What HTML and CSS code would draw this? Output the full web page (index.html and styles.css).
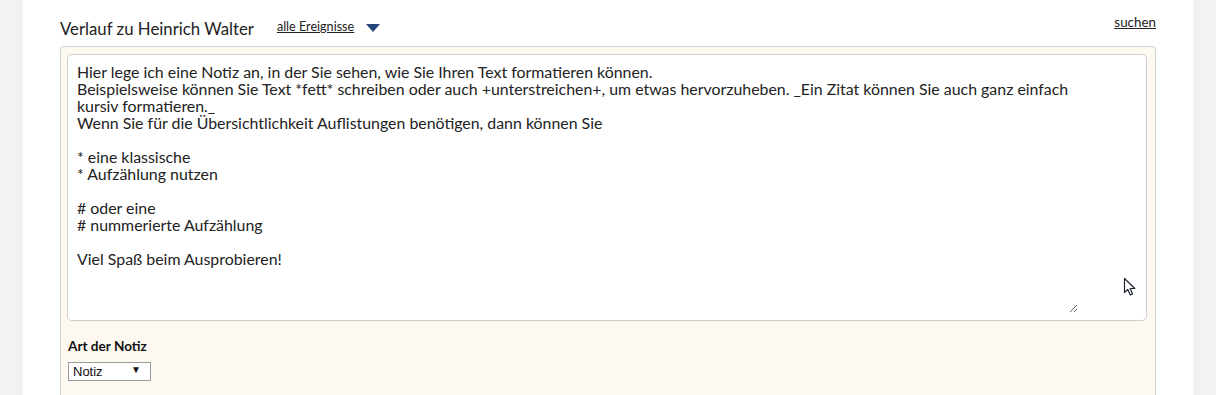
FILE: index.html
```html
<!DOCTYPE html>
<html lang="de">
<head>
  <meta charset="UTF-8">
  <meta name="viewport" content="width=device-width, initial-scale=1.0">
  <title>Verlauf zu Heinrich Walter</title>
  <link rel="stylesheet" href="styles.css">
</head>
<body>
  <div class="page">
    <div class="history-head">
      <h2>Verlauf zu Heinrich Walter</h2>
      <a href="#" class="filter-link">alle Ereignisse</a>
      <span class="filter-arrow"></span>
      <a href="#" class="search-link">suchen</a>
    </div>

    <div class="note-box">
      <div class="note-field">
        <textarea name="note">Hier lege ich eine Notiz an, in der Sie sehen, wie Sie Ihren Text formatieren können.
Beispielsweise können Sie Text *fett* schreiben oder auch +unterstreichen+, um etwas hervorzuheben. _Ein Zitat können Sie auch ganz einfach kursiv formatieren._
Wenn Sie für die Übersichtlichkeit Auflistungen benötigen, dann können Sie

* eine klassische
* Aufzählung nutzen

# oder eine
# nummerierte Aufzählung

Viel Spaß beim Ausprobieren!</textarea>
        <svg class="pointer" width="14" height="20" viewBox="0 0 14 20">
          <path d="M1.5 1.5 L1.5 15.5 L4.8 12.4 L7.3 18 L9.6 17 L7.2 11.5 L11.8 11.5 Z" fill="#fff" stroke="#1d2433" stroke-width="1.2" stroke-linejoin="round"/>
        </svg>
      </div>

      <label class="type-label" for="noteType">Art der Notiz</label>
      <span class="type-select">
        <select id="noteType">
          <option>Notiz</option>
          <option>Anruf</option>
          <option>E-Mail</option>
        </select>
      </span>
    </div>
  </div>
</body>
</html>
```

FILE: styles.css
```css
html, body {
  margin: 0;
  height: 100%;
  overflow: hidden;
}
body {
  background: #f2f2f2;
  font-family: Lato, "Liberation Sans", sans-serif;
  color: #222;
}
.page {
  margin: 0 23px;
  height: 100%;
  background: #fff;
  padding: 0 37px;
}
.history-head {
  display: flex;
  align-items: flex-start;
  height: 46px;
}
.history-head h2 {
  margin: 18px 0 0;
  font-size: 16.8px;
  font-weight: normal;
  color: #222;
}
.filter-link {
  margin: 19px 0 0 23px;
  font-size: 12.6px;
  color: #222;
}
.filter-arrow {
  margin: 24px 0 0 12px;
  width: 0;
  height: 0;
  border-left: 7px solid transparent;
  border-right: 7px solid transparent;
  border-top: 8px solid #24477a;
}
.search-link {
  margin: 14px 0 0 auto;
  font-size: 13.4px;
  color: #222;
}
.note-box {
  box-sizing: border-box;
  height: calc(100% - 46px);
  background: #fdf9f1;
  border: 1px solid #cfcfcf;
  border-bottom: none;
  border-radius: 4px 4px 0 0;
  padding: 7px 8px 0 6px;
}
.note-field {
  position: relative;
  background: #fff;
  border: 1px solid #cdcdcd;
  border-radius: 5px;
  padding: 8px 9px 7px;
}
.note-field textarea {
  display: block;
  width: 1001px;
  height: 250px;
  border: none;
  outline: none;
  padding: 0;
  margin: 0;
  font-family: Lato, "Liberation Sans", sans-serif;
  font-size: 15.9px;
  line-height: 17px;
  color: #222;
  background: #fff;
}
.pointer {
  position: absolute;
  left: 1055px;
  top: 222px;
}
.type-label {
  display: block;
  margin: 17px 0 6px 1px;
  font-size: 13.6px;
  font-weight: bold;
  color: #111;
}
.type-select {
  position: relative;
  display: inline-block;
  margin-left: 1px;
}
.type-select select {
  -webkit-appearance: none;
  appearance: none;
  width: 83px;
  height: 19px;
  border: 1px solid #9a9a9a;
  border-radius: 0;
  background: #fff;
  padding: 0 0 0 4px;
  font-family: "Liberation Sans", Arial, sans-serif;
  font-size: 13px;
  color: #111;
}
.type-select::after {
  content: "\25BC";
  position: absolute;
  right: 10px;
  top: 3px;
  font-size: 10px;
  color: #111;
  pointer-events: none;
}
```
